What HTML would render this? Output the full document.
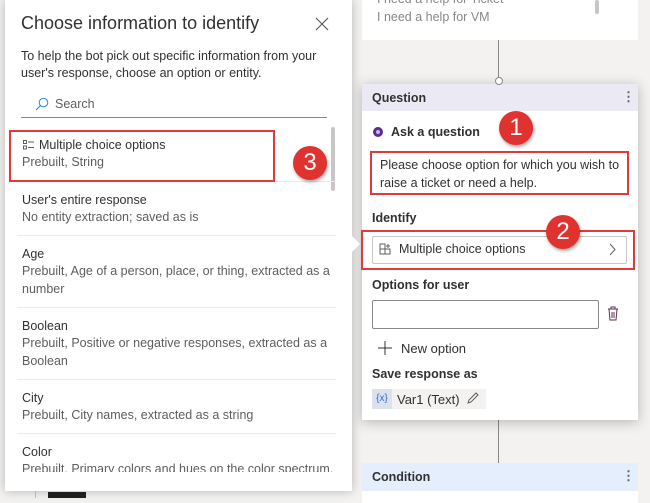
<!DOCTYPE html>
<html><head><style>
*{margin:0;padding:0;box-sizing:border-box}
body{width:650px;height:498px;overflow:hidden;background:#f3f2f1;font-family:"Liberation Sans",sans-serif;position:relative;color:#323130}
.a{position:absolute;white-space:nowrap}
.panel{position:absolute;left:5px;top:0;width:347px;height:491px;background:#fff;box-shadow:0 0 10px rgba(0,0,0,.25)}
.t{font-size:12.5px;color:#323130}
.s{font-size:12.5px;color:#605e5c}
.sep{position:absolute;left:12px;width:319px;height:1px;background:#edebe9}
.badge{position:absolute;width:34px;height:34px;border-radius:50%;background:#e0322f;color:#fff;font-size:24px;text-align:center;line-height:34px;box-shadow:1px 2px 3px rgba(0,0,0,.35)}
.red{position:absolute;border:2px solid #e03a3a}
.card{position:absolute;background:#fff;box-shadow:0 2px 12px rgba(0,0,0,.25)}
</style></head><body>
<div class="a" style="left:35px;top:470px;width:1px;height:28px;background:#c8c6c4"></div>
<div class="a" style="left:48px;top:492px;width:38px;height:6px;background:#222"></div>
<!-- right column -->
<div class="a" style="left:362px;top:0;width:276px;height:40px;background:#fff"></div>
<div class="a s" style="left:377px;top:-8px;color:#8a8886">I need a help for Ticket</div>
<div class="a s" style="left:377px;top:10px;color:#8a8886">I need a help for VM</div>
<div class="a" style="left:595px;top:0;width:4px;height:14px;background:#c8c6c4;border-radius:2px"></div>
<div class="a" style="left:498px;top:40px;width:1px;height:40px;background:#8a8886"></div>
<div class="a" style="left:495px;top:77px;width:8px;height:8px;border-radius:50%;border:1px solid #8a8886;background:#fff;z-index:3"></div>
<div class="a" style="left:498px;top:420px;width:1px;height:44px;background:#8a8886"></div>
<div class="card" style="left:362px;top:84px;width:276px;height:336px">
  <div class="a" style="left:0;top:0;width:276px;height:27px;background:#ebeaf4"></div>
  <div class="a" style="left:10px;top:7px;font-size:12.5px;font-weight:bold;color:#323130">Question</div>
  <div class="a" style="left:260px;top:5px;font-size:13px;font-weight:bold;color:#605e5c">⋮</div>
  <div class="a" style="left:11px;top:43px;width:10px;height:10px;border-radius:50%;background:#5c2d91"></div>
  <div class="a" style="left:14px;top:46px;width:4px;height:4px;border-radius:50%;background:#c8b6e2"></div>
  <div class="a" style="left:29px;top:41px;font-size:12.5px;font-weight:bold">Ask a question</div>
  <div class="a t" style="left:18px;top:74px">Please choose option for which you wish to</div>
  <div class="a t" style="left:18px;top:92px">raise a ticket or need a help.</div>
  <div class="a" style="left:10px;top:127px;font-size:12.5px;font-weight:bold">Identify</div>
  <div class="a" style="left:10px;top:152px;width:255px;height:28px;border:1px solid #c8c6c4;border-radius:2px"></div>
  <svg class="a" style="left:17px;top:159px" width="13" height="13" viewBox="0 0 13 13" fill="none" stroke="#605e5c"><rect x="1" y="6" width="5" height="5"/><rect x="6" y="6" width="5" height="5"/><rect x="1" y="1" width="5" height="5"/><path d="M9 1v4M7 3h4"/></svg>
  <div class="a t" style="left:37px;top:158px">Multiple choice options</div>
  <svg class="a" style="left:247px;top:159px" width="8" height="13"><path d="M1 1l5 5.5L1 12" stroke="#605e5c" fill="none"/></svg>
  <div class="a" style="left:10px;top:194px;font-size:12.5px;font-weight:bold">Options for user</div>
  <div class="a" style="left:10px;top:216px;width:227px;height:29px;border:1px solid #8a8886;border-radius:2px"></div>
  <svg class="a" style="left:245px;top:222px" width="12" height="15" viewBox="0 0 12 15" fill="none" stroke="#5c2d51"><path d="M1 3h10M4 3V1h4v2M2 3l1 11h6l1-11M5 6v6M7 6v6"/></svg>
  <svg class="a" style="left:16px;top:257px" width="14" height="14"><path d="M7 0v14M0 7h14" stroke="#323130"/></svg>
  <div class="a t" style="left:39px;top:257px;font-size:13px">New option</div>
  <div class="a" style="left:10px;top:283px;font-size:12.5px;font-weight:bold">Save response as</div>
  <div class="a" style="left:10px;top:305px;width:114px;height:20px;background:#f3f2f1"></div>
  <div class="a" style="left:10px;top:305px;width:20px;height:20px;background:#dde1ea;color:#2b6fd6;font-size:10px;text-align:center;line-height:20px">{x}</div>
  <div class="a t" style="left:35px;top:308px;font-size:13px">Var1 (Text)</div>
  <svg class="a" style="left:104px;top:308px" width="13" height="13"><path d="M2 11l1-3 7-7 2 2-7 7zM2 11l3-1" stroke="#605e5c" fill="none"/></svg>
</div>
<div class="card" style="left:362px;top:463px;width:276px;height:40px;box-shadow:none">
  <div class="a" style="left:0;top:0;width:276px;height:28px;background:#e5eefc"></div>
  <div class="a" style="left:10px;top:7px;font-size:12.5px;font-weight:bold">Condition</div>
  <div class="a" style="left:260px;top:5px;font-size:13px;font-weight:bold;color:#605e5c">⋮</div>
</div>
<!-- left panel -->
<div class="panel">
  <div class="a" style="left:16px;top:13px;font-size:18px;color:#323130">Choose information to identify</div>
  <svg class="a" style="left:310px;top:17px" width="14" height="14"><path d="M1 1l12 12M13 1L1 13" stroke="#605e5c" stroke-width="1.2"/></svg>
  <div class="a t" style="left:16px;top:49px">To help the bot pick out specific information from your</div>
  <div class="a t" style="left:16px;top:66px">user's response, choose an option or entity.</div>
  <svg class="a" style="left:30px;top:97px" width="14" height="14"><circle cx="8.5" cy="5.5" r="4.3" stroke="#2b88d8" fill="none"/><path d="M5.5 8.5L1 13" stroke="#2b88d8"/></svg>
  <div class="a s" style="left:50px;top:97px;color:#605e5c">Search</div>
  <div class="a" style="left:16px;top:117px;width:306px;height:1px;background:#8a8886"></div>
  <div class="a" style="left:326px;top:127px;width:4px;height:64px;background:#c8c6c4;border-radius:2px"></div>
  <svg class="a" style="left:18px;top:140px" width="12" height="10" fill="none" stroke="#605e5c"><rect x=".5" y=".5" width="3" height="3"/><rect x=".5" y="6" width="3" height="3"/><path d="M5 2h6M5 7.5h6"/></svg>
  <div class="a t" style="left:34px;top:138px">Multiple choice options</div>
  <div class="a s" style="left:17px;top:155px">Prebuilt, String</div>
  <div class="sep" style="top:181px"></div>
  <div class="a t" style="left:17px;top:193px">User's entire response</div>
  <div class="a s" style="left:17px;top:210px">No entity extraction; saved as is</div>
  <div class="sep" style="top:235px"></div>
  <div class="a t" style="left:17px;top:247px">Age</div>
  <div class="a s" style="left:17px;top:264px">Prebuilt, Age of a person, place, or thing, extracted as a</div>
  <div class="a s" style="left:17px;top:282px">number</div>
  <div class="sep" style="top:307px"></div>
  <div class="a t" style="left:17px;top:319px">Boolean</div>
  <div class="a s" style="left:17px;top:336px">Prebuilt, Positive or negative responses, extracted as a</div>
  <div class="a s" style="left:17px;top:354px">Boolean</div>
  <div class="sep" style="top:379px"></div>
  <div class="a t" style="left:17px;top:391px">City</div>
  <div class="a s" style="left:17px;top:408px">Prebuilt, City names, extracted as a string</div>
  <div class="sep" style="top:433px"></div>
  <div class="a t" style="left:17px;top:445px">Color</div>
  <div class="a" style="left:17px;top:460px;width:320px;height:12px;overflow:hidden"><div class="s" style="white-space:nowrap;margin-top:2px">Prebuilt, Primary colors and hues on the color spectrum.</div></div>
</div>
<div class="a" style="left:352px;top:236px;width:0;height:0;border-top:8px solid transparent;border-bottom:8px solid transparent;border-left:8px solid #fff;z-index:5"></div>
<!-- annotations -->
<div class="red" style="left:9px;top:130px;width:266px;height:52px"></div>
<div class="red" style="left:370px;top:151px;width:259px;height:44px"></div>
<div class="red" style="left:361px;top:230px;width:274px;height:40px"></div>
<div class="badge" style="left:293px;top:146px">3</div>
<div class="badge" style="left:499px;top:111px">1</div>
<div class="badge" style="left:546px;top:215px">2</div>
</body></html>
